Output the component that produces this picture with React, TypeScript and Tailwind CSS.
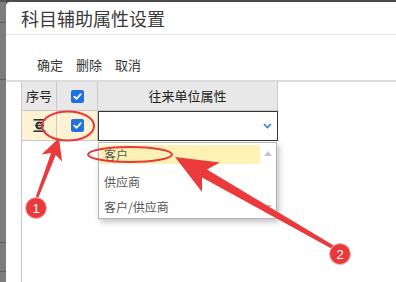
import React from "react";

function Check() {
  return (
    <div className="w-[13px] h-[13px] rounded-[2px] bg-[#1f6fe5] flex items-center justify-center">
      <svg width="11" height="11" viewBox="0 0 11 11">
        <polyline points="2.3,5.6 4.5,7.8 8.8,3.2" fill="none" stroke="#fff" strokeWidth="1.8" strokeLinecap="round" strokeLinejoin="round" />
      </svg>
    </div>
  );
}

export default function App() {
  return (
    <div className="w-[396px] h-[282px] relative overflow-hidden bg-[#4a4a4a] flex font-['Noto_Sans_CJK_SC','Noto_Sans',sans-serif]">
      {/* background strip on the left */}
      <div className="w-[6px] h-full bg-[#7c7c7c] flex flex-col">
        <div className="h-[2px] bg-[#555]" />
        <div className="h-[20px]" />
        <div className="h-[1px] bg-[#5e5e5e]" />
        <div className="h-[56px]" />
        <div className="h-[1px] bg-[#5e5e5e]" />
        <div className="h-[162px]" />
        <div className="h-[1px] bg-[#5e5e5e]" />
        <div className="h-[28px]" />
        <div className="h-[1px] bg-[#5e5e5e]" />
      </div>

      {/* dialog */}
      <div className="flex-1 mt-[2px] bg-white rounded-tl-[4px] flex flex-col">
        <div className="h-[33px] border-b border-[#e4e4e4] pl-[15px] flex items-center text-[18px] text-[#3a3a3a] leading-none">
          科目辅助属性设置
        </div>
        <div className="h-[45px] pt-[14px] pl-[31px] flex items-center gap-[13px] text-[13px] text-[#333]">
          <span>确定</span>
          <span>删除</span>
          <span>取消</span>
        </div>
        <div className="h-[2px] bg-[#dcdcdc]" />

        <div className="flex-1 ml-[15px] border-l border-[#c9c9c9] flex flex-col">
          {/* header */}
          <div className="flex h-[29px]">
            <div className="w-[35px] bg-[#e8e8e8] border-r border-b border-[#c9c9c9] flex items-center justify-center text-[13px] text-[#222]">
              序号
            </div>
            <div className="w-[41px] bg-[#e8e8e8] border-r border-b border-[#c9c9c9] flex items-center justify-center">
              <Check />
            </div>
            <div className="w-[180px] bg-[#e8e8e8] border-r border-b border-[#c9c9c9] flex items-center justify-center text-[13px] text-[#222]">
              往来单位属性
            </div>
          </div>
          {/* row 1 */}
          <div className="flex h-[30px]">
            <div className="w-[35px] bg-[#fdf3d2] border-r border-b border-[#c9c9c9] flex items-center justify-center">
              <svg width="13" height="13" viewBox="0 0 13 13">
                <rect x="0.5" y="0" width="12" height="1.6" fill="#333" />
                <rect x="0.5" y="11.4" width="12" height="1.6" fill="#333" />
                <circle cx="6.5" cy="6.5" r="3" fill="none" stroke="#333" strokeWidth="2" />
                <rect x="2" y="5.8" width="9" height="1.4" fill="#333" />
              </svg>
            </div>
            <div className="w-[41px] bg-[#fdf3d2] border-r border-b border-[#c9c9c9] flex items-center justify-center">
              <Check />
            </div>
            <div className="w-[180px] bg-white border border-[#333] flex items-center justify-end pr-[5px]">
              <svg width="9" height="6" viewBox="0 0 9 6">
                <polyline points="1,1 4.5,4.5 8,1" fill="none" stroke="#2f7de1" strokeWidth="1.6" />
              </svg>
            </div>
          </div>
        </div>
      </div>

      {/* dropdown list */}
      <div className="absolute left-[98px] top-[142px] w-[179px] h-[77px] bg-white border border-[#b5b5b5] shadow-[2px_3px_6px_rgba(0,0,0,0.25)] flex">
        <div className="flex-1 flex flex-col pt-[2px] pl-[1px] text-[12px] text-[#555]">
          <div className="h-[19px] bg-[#fdf2b4] flex items-center pl-[4px]">客户</div>
          <div className="h-[36px] flex items-center pl-[4px]">供应商</div>
          <div className="h-[14px] flex items-center pl-[4px]">客户/供应商</div>
        </div>
        <div className="w-[16px] flex flex-col items-center justify-between py-[8px]">
          <svg width="8" height="5" viewBox="0 0 8 5">
            <polygon points="0,5 4,0 8,5" fill="#c4c4c4" />
          </svg>
          <svg width="8" height="5" viewBox="0 0 8 5">
            <polygon points="0,0 4,5 8,0" fill="#c4c4c4" />
          </svg>
        </div>
      </div>

      {/* annotations */}
      <svg className="absolute left-0 top-0" width="396" height="282" viewBox="0 0 396 282">
        <ellipse cx="68" cy="126" rx="26" ry="14.5" fill="none" stroke="#e8363a" strokeWidth="2" />
        <ellipse cx="130" cy="154.5" rx="42" ry="7.5" fill="none" stroke="#e8363a" strokeWidth="2" />
        <polygon
          points="59,138 62,161.5 55.7,154.9 37.2,200.6 34.8,199.4 51.1,153.1 41.5,154.5"
          fill="#ea3a3c"
        />
        <polygon
          points="175,157 220,162.5 207,169.5 337,247.5 335,250.5 202,177.5 202,192"
          fill="#ea3a3c"
        />
        <circle cx="36" cy="208" r="10.5" fill="#e9393b" stroke="#f6b5b5" strokeWidth="1" />
        <text x="36" y="212.5" textAnchor="middle" fontSize="13" fill="#fff" fontFamily="Liberation Sans, sans-serif">1</text>
        <circle cx="340" cy="254" r="10.5" fill="#e9393b" stroke="#f6b5b5" strokeWidth="1" />
        <text x="340" y="258.5" textAnchor="middle" fontSize="13" fill="#fff" fontFamily="Liberation Sans, sans-serif">2</text>
      </svg>
    </div>
  );
}
